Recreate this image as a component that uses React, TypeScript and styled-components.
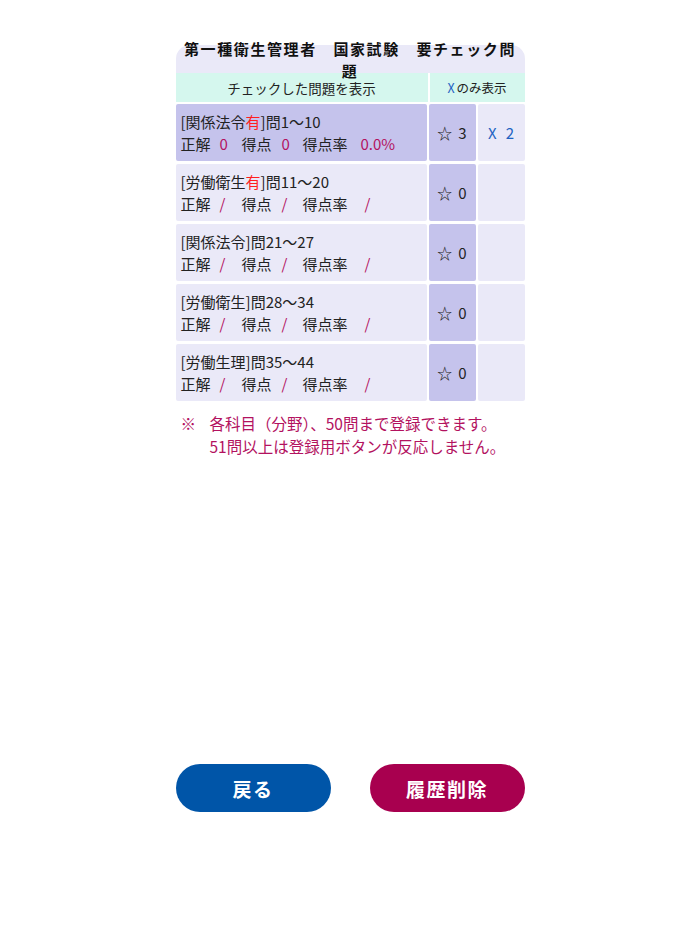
import React from "react";
import styled, { createGlobalStyle } from "styled-components";

const GlobalStyle = createGlobalStyle`
  html, body {
    margin: 0;
    padding: 0;
    background: #fff;
  }
  body {
    font-family: "Noto Sans CJK JP", "Noto Sans", sans-serif;
    color: #222;
  }
`;

const colors = {
  lavender: "#eae9f8",
  purple: "#c5c3ec",
  mint: "#d5f7ee",
  pink: "#b3125f",
  red: "#ff1f1f",
  blue: "#1f63c2",
  btnBlue: "#0055a8",
  btnMagenta: "#a8004f",
};

const Page = styled.div`
  width: 349px;
  margin: 0 auto;
  padding-top: 45px;
`;

const Card = styled.div`
  display: flow-root;
  background-color: ${colors.lavender};
  border-radius: 14px 14px 0 0;
`;

const Title = styled.h1`
  position: relative;
  z-index: 1;
  height: 35px;
  margin: -7px 0 0;
  padding: 0 6px;
  font-size: 15px;
  font-weight: 700;
  line-height: 22px;
  letter-spacing: 1.6px;
  text-align: center;
  color: #111;
`;

const HeaderRow = styled.div`
  display: grid;
  grid-template-columns: 252px 1fr;
  column-gap: 2px;
  background-color: #fff;
`;

const HeaderCell = styled.div<{ small?: boolean }>`
  height: 29px;
  display: flex;
  align-items: center;
  justify-content: center;
  background-color: ${colors.mint};
  font-size: ${({ small }) => (small ? "12.5px" : "13.5px")};
`;

const BlueX = styled.span`
  color: ${colors.blue};
  margin-right: 2px;
`;

const Rows = styled.div`
  display: grid;
  grid-template-columns: 251px 47px 47px;
  column-gap: 2px;
  row-gap: 3px;
  padding-top: 2px;
`;

const Cell = styled.div<{ dark?: boolean }>`
  height: 57px;
  border-radius: 2px;
  background-color: ${({ dark }) => (dark ? colors.purple : colors.lavender)};
`;

const TextCell = styled(Cell)`
  padding: 0 5px;
  display: flex;
  flex-direction: column;
  justify-content: center;
  font-size: 15px;
  line-height: 22px;
  white-space: nowrap;
`;

const CountCell = styled(Cell)<{ blue?: boolean }>`
  display: flex;
  align-items: center;
  justify-content: center;
  gap: ${({ blue }) => (blue ? "9px" : "6px")};
  font-size: 15px;
  color: ${({ blue }) => (blue ? colors.blue : "#222")};
`;

const Has = styled.span`
  color: ${colors.red};
`;

const Score = styled.div`
  display: flex;
  align-items: baseline;
`;

const Value = styled.span<{ lead: number; span?: number }>`
  display: inline-block;
  box-sizing: border-box;
  width: ${({ span }) => (span ? `${span}px` : "auto")};
  padding-left: ${({ lead }) => lead}px;
  color: ${colors.pink};
`;

const Note = styled.div`
  display: grid;
  grid-template-columns: 29px 1fr;
  margin-top: 11px;
  padding-left: 5px;
  font-size: 15.5px;
  line-height: 23px;
  color: ${colors.pink};
`;

const Buttons = styled.div`
  display: flex;
  justify-content: space-between;
  margin-top: 306px;
`;

const PillButton = styled.button<{ tone: string }>`
  width: 155px;
  height: 48px;
  border: 0;
  border-radius: 24px;
  background-color: ${({ tone }) => tone};
  color: #fff;
  font-family: "Noto Sans CJK JP", sans-serif;
  font-size: 19px;
  font-weight: 700;
  letter-spacing: 1.5px;
  cursor: pointer;
`;

interface IRow {
  field: string;
  has: boolean;
  range: string;
  stars: number;
  crosses?: number;
  scores?: [string, string, string];
  active?: boolean;
}

const rows: IRow[] = [
  { field: "関係法令", has: true, range: "問1〜10", stars: 3, crosses: 2, scores: ["0", "0", "0.0%"], active: true },
  { field: "労働衛生", has: true, range: "問11〜20", stars: 0 },
  { field: "関係法令", has: false, range: "問21〜27", stars: 0 },
  { field: "労働衛生", has: false, range: "問28〜34", stars: 0 },
  { field: "労働生理", has: false, range: "問35〜44", stars: 0 },
];

const App = () => {
  return (
    <>
      <GlobalStyle />
      <Page>
        <Card>
          <Title>第一種衛生管理者　国家試験　要チェック問題</Title>
          <HeaderRow>
            <HeaderCell>チェックした問題を表示</HeaderCell>
            <HeaderCell small>
              <BlueX>X</BlueX>のみ表示
            </HeaderCell>
          </HeaderRow>
        </Card>
        <Rows>
          {rows.map((row, index) => (
            <React.Fragment key={index}>
              <TextCell dark={row.active}>
                <div>
                  [{row.field}
                  {row.has && <Has>有</Has>}]{row.range}
                </div>
                <Score>
                  正解
                  <Value lead={9} span={31}>{row.scores ? row.scores[0] : "/"}</Value>
                  得点
                  <Value lead={10} span={31}>{row.scores ? row.scores[1] : "/"}</Value>
                  得点率
                  <Value lead={row.scores ? 13 : 17}>{row.scores ? row.scores[2] : "/"}</Value>
                </Score>
              </TextCell>
              <CountCell dark>
                <span>☆</span>
                <span>{row.stars}</span>
              </CountCell>
              <CountCell blue dark={false}>
                {row.crosses !== undefined && (
                  <>
                    <span>X</span>
                    <span>{row.crosses}</span>
                  </>
                )}
              </CountCell>
            </React.Fragment>
          ))}
        </Rows>
        <Note>
          <span>※</span>
          <div>
            各科目（分野）、50問まで登録できます。
            <br />
            51問以上は登録用ボタンが反応しません。
          </div>
        </Note>
        <Buttons>
          <PillButton tone={colors.btnBlue}>戻る</PillButton>
          <PillButton tone={colors.btnMagenta}>履歴削除</PillButton>
        </Buttons>
      </Page>
    </>
  );
};

export default App;
